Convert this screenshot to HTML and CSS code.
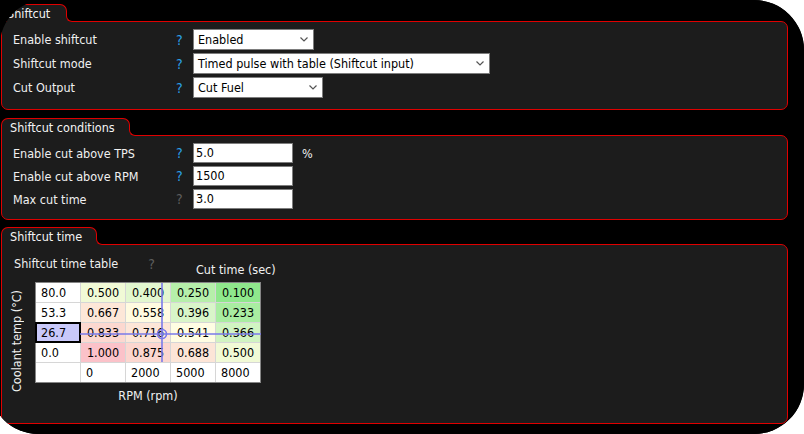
FILE: index.html
```html
<!DOCTYPE html>
<html>
<head>
<meta charset="utf-8">
<link rel="stylesheet" href="styles.css">
</head>
<body>
<div class="screen">
  <div class="clip">
    <section class="group">
      <div class="tab t1">Shiftcut</div>
      <div class="panel p1">
        <div class="form">
          <span class="lbl">Enable shiftcut</span><span class="help">?</span>
          <div class="select w-en"><span>Enabled</span><svg width="8" height="5" viewBox="0 0 8 5"><polyline points="0.5,0.5 4,4 7.5,0.5" fill="none" stroke="#555" stroke-width="1.2"/></svg></div>
          <span class="lbl">Shiftcut mode</span><span class="help">?</span>
          <div class="select w-mode"><span>Timed pulse with table (Shiftcut input)</span><svg width="8" height="5" viewBox="0 0 8 5"><polyline points="0.5,0.5 4,4 7.5,0.5" fill="none" stroke="#555" stroke-width="1.2"/></svg></div>
          <span class="lbl">Cut Output</span><span class="help">?</span>
          <div class="select w-out"><span>Cut Fuel</span><svg width="8" height="5" viewBox="0 0 8 5"><polyline points="0.5,0.5 4,4 7.5,0.5" fill="none" stroke="#555" stroke-width="1.2"/></svg></div>
        </div>
      </div>
    </section>

    <section class="group g2">
      <div class="tab">Shiftcut conditions</div>
      <div class="panel p2">
        <div class="form form2">
          <span class="lbl">Enable cut above TPS</span><span class="help">?</span>
          <div class="field"><span class="input">5.0</span><span class="unit">%</span></div>
          <span class="lbl">Enable cut above RPM</span><span class="help">?</span>
          <div class="field"><span class="input">1500</span></div>
          <span class="lbl">Max cut time</span><span class="help off">?</span>
          <div class="field"><span class="input">3.0</span></div>
        </div>
      </div>
    </section>

    <section class="group g3">
      <div class="tab">Shiftcut time</div>
      <div class="panel p3">
        <div class="map-title"><span>Shiftcut time table</span><span class="help off q2">?</span></div>
        <div class="axis-top">Cut time (sec)</div>
        <div class="chart">
          <div class="axis-left">Coolant temp (°C)</div>
          <div class="map">
            <div class="c">80.0</div>
            <div class="c d" style="background:#f1fad6">0.500</div>
            <div class="c d" style="background:#e2f7cf">0.400</div>
            <div class="c d" style="background:#b6efaa">0.250</div>
            <div class="c d" style="background:#8fe88c">0.100</div>

            <div class="c">53.3</div>
            <div class="c d" style="background:#fde7d8">0.667</div>
            <div class="c d" style="background:#fffbe1">0.558</div>
            <div class="c d" style="background:#d9f5c9">0.396</div>
            <div class="c d" style="background:#a9eda1">0.233</div>

            <div class="c sel">26.7</div>
            <div class="c d" style="background:#fcd8d0">0.833</div>
            <div class="c d" style="background:#fde6d8">0.716</div>
            <div class="c d" style="background:#fffde3">0.541</div>
            <div class="c d" style="background:#d1f4c2">0.366</div>

            <div class="c">0.0</div>
            <div class="c d" style="background:#fbc2c9">1.000</div>
            <div class="c d" style="background:#fcd6cf">0.875</div>
            <div class="c d" style="background:#fce5d7">0.688</div>
            <div class="c d" style="background:#f1fad6">0.500</div>

            <div class="c"></div>
            <div class="c">0</div>
            <div class="c">2000</div>
            <div class="c">5000</div>
            <div class="c">8000</div>

            <svg class="cross" width="225" height="99" viewBox="0 0 225 99">
              <line x1="126" y1="0" x2="126" y2="79" stroke="#7a7aea" stroke-width="1.6"/>
              <line x1="44" y1="51" x2="225" y2="51" stroke="#7a7aea" stroke-width="1.6"/>
              <circle cx="126" cy="51" r="4.5" fill="none" stroke="#7a7aea" stroke-width="1.6"/>
            </svg>
          </div>
          <div class="axis-bottom">RPM (rpm)</div>
        </div>
      </div>
    </section>
  </div>
</div>
</body>
</html>
```

FILE: styles.css
```css
html, body {
  margin: 0;
  padding: 0;
}
body {
  background: #ffffff;
  width: 804px;
  height: 434px;
  overflow: hidden;
  font-family: "DejaVu Sans Condensed", "DejaVu Sans", sans-serif;
  font-stretch: condensed;
  font-size: 12.5px;
  color: #f0f0f0;
}
.screen {
  margin-left: -10px;
  width: 814px;
  height: 434px;
  background: #000;
  border-radius: 0 50px 50px 48px;
  overflow: hidden;
}
.clip {
  box-sizing: border-box;
  height: 100%;
  margin-left: 10px;
  background: #000;
  border-top-left-radius: 45px;
  overflow: hidden;
  padding: 4px 16px 0 1px;
  display: flex;
  flex-direction: column;
}
.group {
  display: flex;
  flex-direction: column;
  align-items: flex-start;
}
.g2 { margin-top: 8px; }
.g3 { margin-top: 7px; }
.tab {
  position: relative;
  z-index: 1;
  box-sizing: border-box;
  height: 18px;
  line-height: 17px;
  margin-bottom: -1px;
  padding: 0 14px 0 8px;
  border: 1px solid #e00000;
  border-bottom: none;
  border-radius: 7px 7px 0 0;
  background: #1c1c1c;
  color: #f4f4f4;
  white-space: nowrap;
}
.t1 {
  padding-left: 5px;
  padding-right: 16px;
  line-height: 18px;
}
.tab::before,
.tab::after {
  content: "";
  position: absolute;
  left: 100%;
  bottom: 0;
  width: 7px;
  height: 7px;
  box-sizing: border-box;
}
.tab::before {
  background: #1c1c1c;
}
.tab::after {
  background: #000;
  border-left: 1px solid #e00000;
  border-bottom: 1px solid #e00000;
  border-bottom-left-radius: 6px;
}
.panel {
  align-self: stretch;
  border: 1px solid #e00000;
  border-radius: 0 7px 7px 7px;
  background: #1c1c1c;
}
.p1 { padding: 7px 0 11px 11px; }
.p2 { padding: 7px 0 10px 11px; }
.p3 { padding: 11px 0 0 11px; height: 180px; box-sizing: border-box; }

.form {
  display: grid;
  grid-template-columns: 163px 17px auto;
  grid-auto-rows: 21px;
  row-gap: 3px;
  align-items: center;
}
.form2 { grid-auto-rows: 20px; }
.lbl { white-space: nowrap; }
.help {
  color: #2a9fe6;
  font-size: 14px;
}
.help.off { color: #5e5e5e; }

.select {
  box-sizing: border-box;
  height: 21px;
  display: flex;
  align-items: center;
  justify-content: space-between;
  padding: 0 5px 0 4px;
  background: #fff;
  border: 1px solid #7d7d7d;
  color: #000;
  white-space: nowrap;
}
.w-en { width: 121px; }
.w-mode { width: 297px; }
.w-out { width: 130px; }

.field {
  display: flex;
  align-items: center;
  gap: 9px;
}
.input {
  box-sizing: border-box;
  width: 100px;
  height: 20px;
  line-height: 18px;
  padding: 0 2px;
  background: #fff;
  border: 1px solid #7d7d7d;
  color: #000;
}
.unit { color: #f0f0f0; }

.map-title {
  display: flex;
  height: 16px;
  line-height: 16px;
  padding-left: 1px;
}
.q2 { margin-left: 30px; }
.axis-top {
  margin-top: -10px;
  padding-left: 183px;
  height: 16px;
  line-height: 16px;
}
.chart {
  margin-top: 4px;
  display: grid;
  grid-template-columns: 22px auto;
  grid-template-rows: auto 21px;
  align-items: start;
}
.axis-left {
  grid-row: 1 / 3;
  grid-column: 1;
  align-self: end;
  margin-left: -4px;
  margin-bottom: 12px;
  writing-mode: vertical-rl;
  transform: rotate(180deg);
  line-height: 16px;
  white-space: nowrap;
}
.map {
  position: relative;
  display: grid;
  grid-template-columns: repeat(5, 44px);
  grid-auto-rows: 19px;
  gap: 1px;
  background: #d6d6d6;
  border: 1px solid #858585;
  width: max-content;
  color: #000;
}
.c {
  background: #fff;
  display: flex;
  align-items: center;
  padding-left: 5px;
  white-space: nowrap;
}
.c.d {
  justify-content: center;
  padding-left: 0;
}
.c.sel {
  background: #c9c9fa;
  box-shadow: 0 0 0 1px #000, inset 0 0 0 1px #000;
  position: relative;
  z-index: 1;
}
.cross {
  position: absolute;
  left: 0;
  top: 0;
  z-index: 2;
  pointer-events: none;
}
.axis-bottom {
  grid-column: 2;
  grid-row: 2;
  width: 226px;
  text-align: center;
  line-height: 16px;
  margin-top: 5px;
}
```
